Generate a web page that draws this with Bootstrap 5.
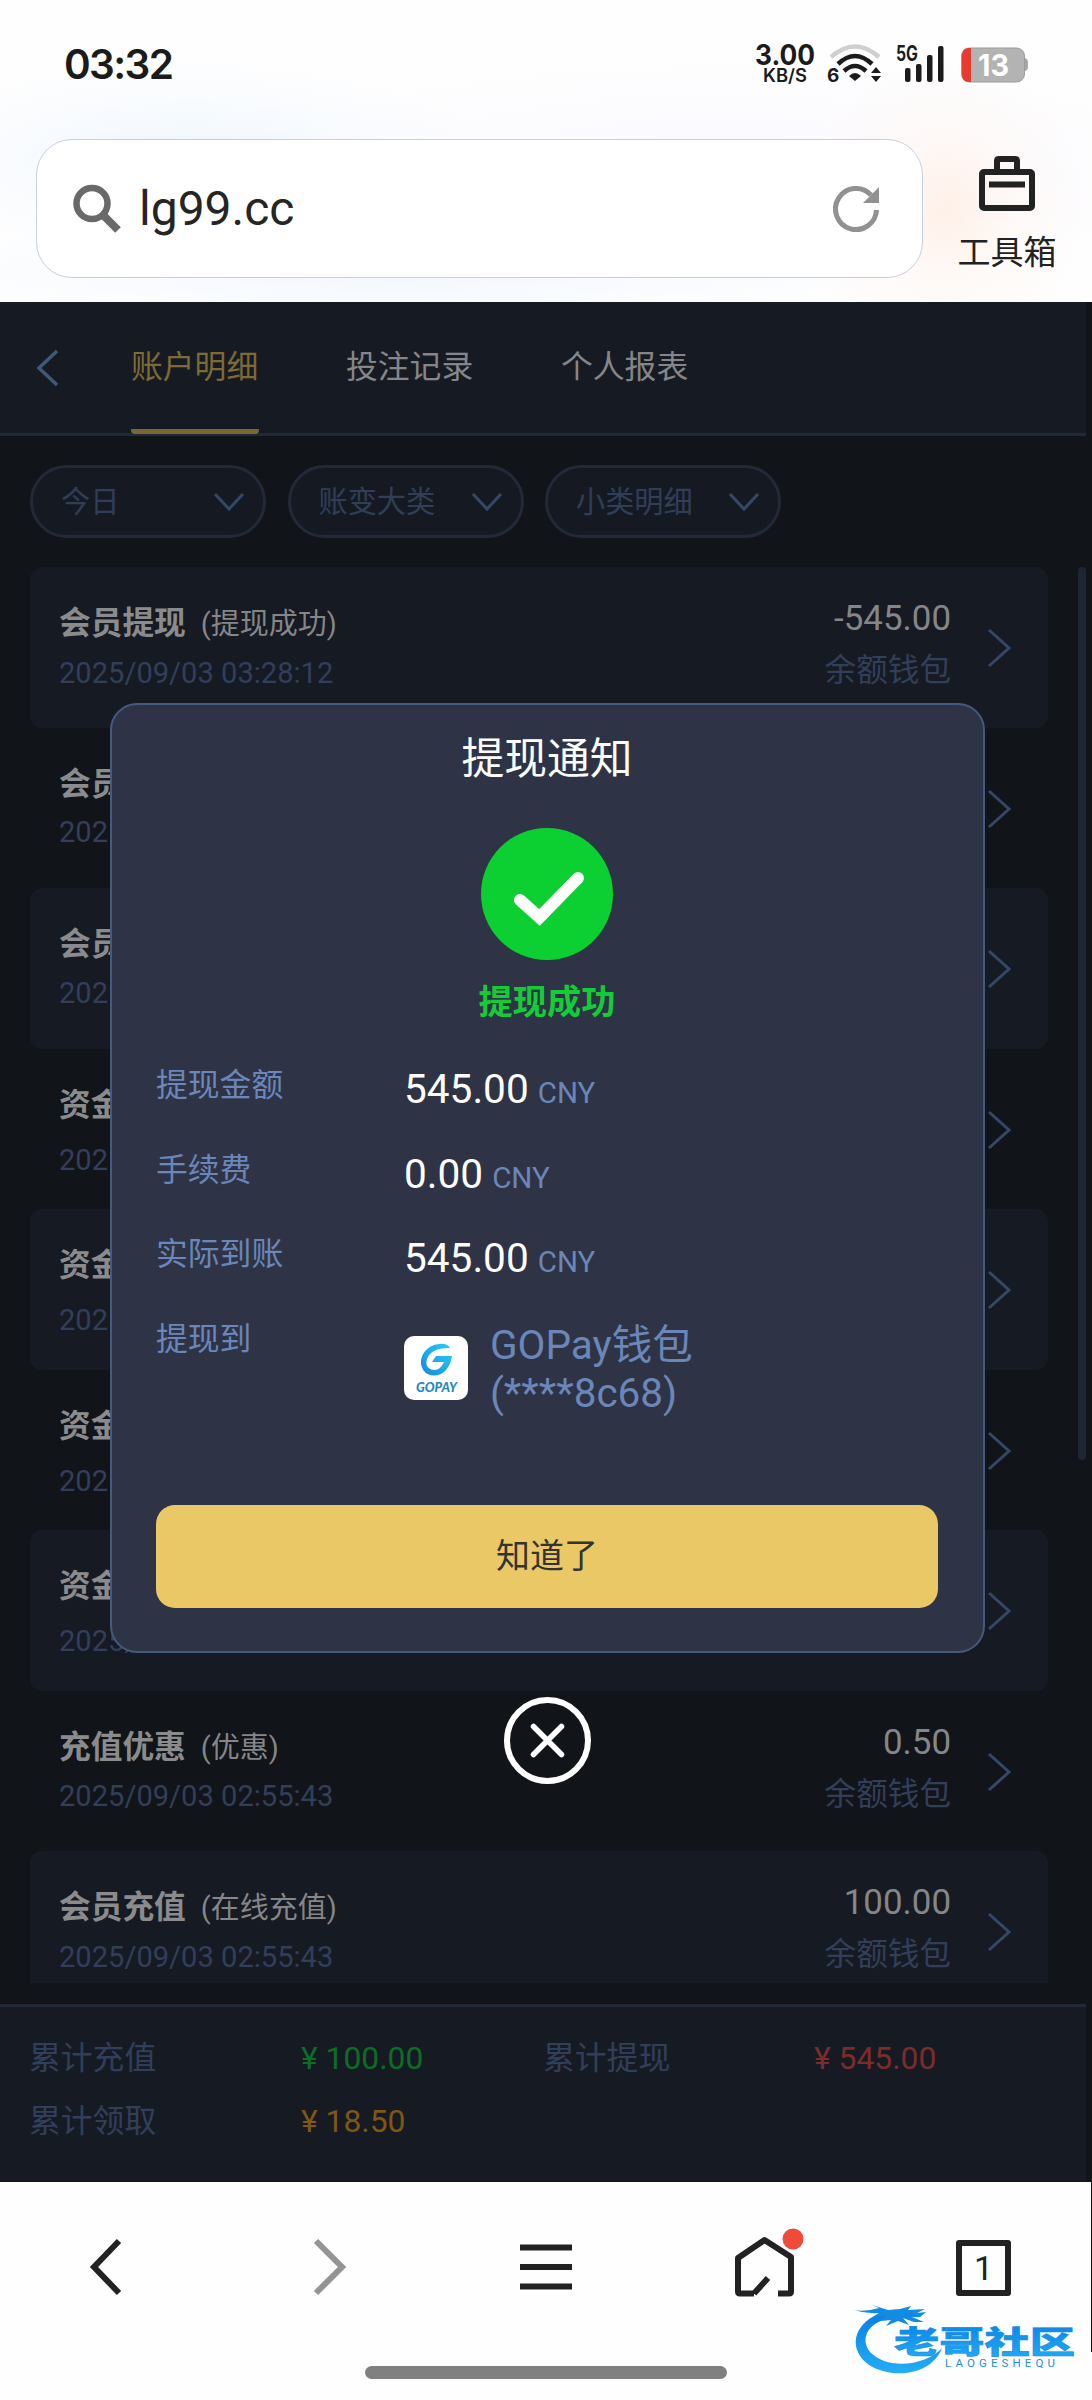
<!DOCTYPE html>
<html lang="zh-CN">
<head>
<meta charset="utf-8">
<meta name="viewport" content="width=device-width, initial-scale=1">
<title>账户明细</title>
<link rel="stylesheet" href="https://cdn.jsdelivr.net/npm/bootstrap@5.3.0/dist/css/bootstrap.min.css">
<style>
body{font-family:Roboto,"Noto Sans CJK SC",sans-serif;width:1092px;height:2400px;overflow:hidden;background:#fefefe;color:#222}
svg{display:block;flex:none;overflow:visible}
.top-area{height:302px;background:radial-gradient(ellipse 300px 100px at 190px 160px,#edf6fe 0,#f4f9fe80 60%,#fff0 100%),radial-gradient(ellipse 140px 150px at 945px 210px,#fff1e9 0,#fff7f280 55%,#fff0 100%),radial-gradient(ellipse 500px 50px at 400px 270px,#f1f7fe 0,#fff0 100%),radial-gradient(ellipse 500px 110px at 720px 170px,#faf8ff 0,#fff0 100%),#fefefe}
.status-row{height:139px;padding:42px 64px 0 64px}
.clock-text{font-family:Inter,Roboto,sans-serif;font-weight:600;font-size:40.5px;line-height:45px;letter-spacing:-1.6px;color:#1b1b1b}
.url-box{width:887px;height:139px;margin-left:36px;border:1px solid #c8d0de;border-radius:36px;background:#fff;padding:0 42px 0 36px}
.url-text{font-size:48px;line-height:60px;margin-left:16px;color:#252525}
.toolbox{width:100px;margin-left:34px;padding-top:17px}
.toolbox-label{font-size:33px;line-height:40px;margin-top:21px}
.site{height:1880px;background:#111418}
.tabs-bar{height:134px;width:1086px;background:#161b23;border-bottom:3px solid #222936;padding-left:36px}
.back-ico{margin-top:48px}
.tab-set{margin-left:71px}
.tab-item{font-size:31.8px;line-height:131px;height:132px;width:127.500px;margin-right:87.500px;color:#858687;white-space:nowrap}
.tab-item.on{color:#7d6a35;border-bottom:5px solid #796736;border-radius:0 0 4px 4px}
.filters{padding:29px 0 29px 30px;gap:21.500px}
.pill{width:236px;height:73px;border:3px solid #222a38;border-radius:37px;background:#151a22;font-size:29.200px;line-height:44px;color:#303e58;padding:1px 19px 0 28px}
.feed{height:1416px;overflow:hidden;width:1048px;padding-left:30px}
.entry{height:160.5px;border-radius:12px;padding:32px 37px 0 29px}
.entry:nth-child(odd){background:#161a22}
.e-title{font-weight:700;font-size:31.7px;line-height:49px;color:#8a8b8c;white-space:nowrap}
.e-title span{font-weight:400;font-size:29px;margin-left:15px;color:#858687}
.e-date{font-size:29.1px;line-height:40px;margin-top:3.500px;color:#323f5a}
.e-low .e-date{margin-top:10px}
.e-amt{font-size:34.9px;line-height:40px;color:#858687}
.e-wallet{font-size:31.6px;line-height:44px;margin-top:10px;color:#323f5a}
.e-arrow{margin:30px 0 0 38px}
.text-end + .e-arrow{margin-left:37px}
.track{width:8px;height:893px;margin-left:30px;border-radius:4px;background:#1e2636}
.totals{width:1086px;height:177px;margin-top:21px;background:#161b23;border-top:3px solid #222936;padding:20px 0 0 29px}
.tot{font-size:31.8px;line-height:63px;color:#323f5a;display:grid;grid-template-columns:272px 242px 271px 200px}
.c-in{color:#0e6d25}.c-out{color:#7c2c2b}.c-gift{color:#7f5713}
.notice{position:absolute;left:110px;top:703px;width:875px;height:950px;border:2px solid #455a80;border-radius:27px;background:#2e3446;padding:27px 45px 0 44px}
.n-title{font-size:42.8px;line-height:55px;color:#fff}
.n-ico{margin-top:41px}
.n-ok{font-weight:700;font-size:34.2px;line-height:44px;margin-top:20px;color:#14cc38}
.n-list{margin-top:37px}
.n-row{height:84.6px;color:#6b86b8}
.n-label{font-size:31.8px;line-height:48px;width:248px}
.n-val{font-size:40.6px;line-height:56px;color:#fff;white-space:nowrap}
.n-val span{font-size:29.5px;color:#6b86b8;margin-left:9px}
.n-pay{margin-top:21px}
.n-bank{font-size:40.5px;line-height:48.5px;margin:6px 0 0 22px}
.n-btn{height:103px;border-radius:19px;background:#ebc866;color:#333;font-size:34px;border:0;margin-top:106px}
.close-x{position:absolute;left:504px;top:1697px}
.bottom-nav{height:218px;position:relative}
.nav-icons{padding:54px 81px 0 88px}
.mark-logo{position:absolute;left:852px;top:118px}
.home-bar{position:absolute;left:365px;top:184px;width:362px;height:13px;border-radius:7px;background:#808080}
.edge{position:absolute;right:0;top:0;width:1px;height:170px;background:#111}
.tab-count{width:56px;height:56px;border:6px solid #222;border-radius:3px;font-size:34px;line-height:44px;margin:4px 0 0 161px}
.ic-fwd{margin-left:192px}.ic-menu{margin-left:172px}.ic-home{margin-left:163px}
</style>
<script src="https://cdn.jsdelivr.net/npm/bootstrap@5.3.0/dist/js/bootstrap.bundle.min.js"></script>
</head>
<body class="position-relative m-0">
<header class="top-area">
  <div class="status-row d-flex justify-content-between">
    <div class="clock-text">03:32</div>
    <svg width="276" height="44" viewBox="752 42 276 44" fill="#1b1b1b" font-family="Inter,Roboto,sans-serif">
      <text x="755" y="65" font-size="28" font-weight="700" textLength="60" lengthAdjust="spacingAndGlyphs">3.00</text>
      <text x="763" y="81.500" font-size="18" font-weight="600" textLength="44" lengthAdjust="spacingAndGlyphs">KB/S</text>
      <g fill="none" stroke="#1b1b1b" stroke-width="4.500">
        <path d="M831 57Q855 36 879 57" stroke="#cfcfcf"/>
        <path d="M838 64Q855 48 872 64"/><path d="M844 71Q855 61 866 71"/>
      </g>
      <path d="M849 76Q855 70 861 76L855 81Z"/>
      <text x="827" y="81.500" font-size="19" font-weight="700">6</text>
      <path d="M871 73l5-6 5 6zM871 76l5 6 5-6z"/>
      <text x="896" y="61" font-size="21" font-weight="700" textLength="22" lengthAdjust="spacingAndGlyphs">5G</text>
      <rect x="905" y="68" width="5.500" height="14" rx="2"/><rect x="916" y="64" width="5.500" height="18" rx="2"/><rect x="927" y="55" width="5.500" height="27" rx="2"/><rect x="938" y="46" width="5.500" height="36" rx="2"/>
      <rect x="961.500" y="48" width="63" height="34" rx="8" fill="#b3b3b3" stroke="#9b9b9b"/>
      <path d="M1025 58q3 1 3 4v5q0 3-3 4z" fill="#a8a8a8"/>
      <path d="M971 48h-2q-7 0-7 8v18q0 8 7 8h2z" fill="#e83a2d"/>
      <text x="978" y="76" font-size="30" font-weight="700" fill="#fff" textLength="31" lengthAdjust="spacingAndGlyphs">13</text>
    </svg>
  </div>
  <div class="d-flex">
    <div class="url-box d-flex align-items-center">
      <svg width="50" height="50" fill="none" stroke="#696969" stroke-width="6.500"><circle cx="19" cy="19.500" r="15.500"/><path d="M30 31L45 46" stroke-width="8"/></svg>
      <div class="url-text flex-grow-1">lg99.cc</div>
      <svg width="48" height="48" fill="none" stroke="#919191" stroke-width="5"><path d="M44.500 25A20.500 20.500 0 1 1 39 10"/><path d="M47 2V18H31Z" fill="#919191" stroke="none"/></svg>
    </div>
    <div class="toolbox d-flex flex-column align-items-center">
      <svg width="56" height="56" fill="none" stroke="#222" stroke-width="6"><rect x="3" y="16" width="50" height="36" rx="2"/><path d="M18 16V5q0-2 2-2H36q2 0 2 2V16"/><path d="M10 28.500H46"/></svg>
      <div class="toolbox-label">工具箱</div>
    </div>
  </div>
</header>

<main class="site">
  <nav class="tabs-bar d-flex">
    <svg class="back-ico" width="24" height="36" fill="none" stroke="#405879" stroke-width="3.500"><path d="M21 1L3 18 21 35"/></svg>
    <div class="tab-set d-flex">
      <div class="tab-item on">账户明细</div><div class="tab-item">投注记录</div><div class="tab-item">个人报表</div>
    </div>
  </nav>
  <div class="filters d-flex">
    <div class="pill d-flex align-items-center justify-content-between">今日<svg width="30" height="20" fill="none" stroke="#334968" stroke-width="3"><path d="M1 2L15 17 29 2"/></svg></div>
    <div class="pill d-flex align-items-center justify-content-between">账变大类<svg width="30" height="20" fill="none" stroke="#334968" stroke-width="3"><path d="M1 2L15 17 29 2"/></svg></div>
    <div class="pill d-flex align-items-center justify-content-between">小类明细<svg width="30" height="20" fill="none" stroke="#334968" stroke-width="3"><path d="M1 2L15 17 29 2"/></svg></div>
  </div>
  <div class="d-flex">
    <div class="feed">
      <div class="entry d-flex"><div class="flex-grow-1"><div class="e-title">会员提现<span>(提现成功)</span></div><div class="e-date">2025/09/03 03:28:12</div></div><div class="text-end"><div class="e-amt">-545.00</div><div class="e-wallet">余额钱包</div></div><svg class="e-arrow" width="23" height="38" fill="none" stroke="#334968" stroke-width="3"><path d="M1 1L21 19 1 37"/></svg></div>
      <div class="entry d-flex"><div class="flex-grow-1"><div class="e-title">会员</div><div class="e-date">202</div></div><svg class="e-arrow" width="23" height="38" fill="none" stroke="#334968" stroke-width="3"><path d="M1 1L21 19 1 37"/></svg></div>
      <div class="entry d-flex"><div class="flex-grow-1"><div class="e-title">会员</div><div class="e-date">202</div></div><svg class="e-arrow" width="23" height="38" fill="none" stroke="#334968" stroke-width="3"><path d="M1 1L21 19 1 37"/></svg></div>
      <div class="entry e-low d-flex"><div class="flex-grow-1"><div class="e-title">资金</div><div class="e-date">202</div></div><svg class="e-arrow" width="23" height="38" fill="none" stroke="#334968" stroke-width="3"><path d="M1 1L21 19 1 37"/></svg></div>
      <div class="entry e-low d-flex"><div class="flex-grow-1"><div class="e-title">资金</div><div class="e-date">202</div></div><svg class="e-arrow" width="23" height="38" fill="none" stroke="#334968" stroke-width="3"><path d="M1 1L21 19 1 37"/></svg></div>
      <div class="entry e-low d-flex"><div class="flex-grow-1"><div class="e-title">资金</div><div class="e-date">202</div></div><svg class="e-arrow" width="23" height="38" fill="none" stroke="#334968" stroke-width="3"><path d="M1 1L21 19 1 37"/></svg></div>
      <div class="entry e-low d-flex"><div class="flex-grow-1"><div class="e-title">资金</div><div class="e-date">2025/</div></div><svg class="e-arrow" width="23" height="38" fill="none" stroke="#334968" stroke-width="3"><path d="M1 1L21 19 1 37"/></svg></div>
      <div class="entry d-flex"><div class="flex-grow-1"><div class="e-title">充值优惠<span>(优惠)</span></div><div class="e-date">2025/09/03 02:55:43</div></div><div class="text-end"><div class="e-amt">0.50</div><div class="e-wallet">余额钱包</div></div><svg class="e-arrow" width="23" height="38" fill="none" stroke="#334968" stroke-width="3"><path d="M1 1L21 19 1 37"/></svg></div>
      <div class="entry d-flex"><div class="flex-grow-1"><div class="e-title">会员充值<span>(在线充值)</span></div><div class="e-date">2025/09/03 02:55:43</div></div><div class="text-end"><div class="e-amt">100.00</div><div class="e-wallet">余额钱包</div></div><svg class="e-arrow" width="23" height="38" fill="none" stroke="#334968" stroke-width="3"><path d="M1 1L21 19 1 37"/></svg></div>
    </div>
    <div class="track"></div>
  </div>
  <footer class="totals">
    <div class="tot"><span>累计充值</span><span class="c-in">¥ 100.00</span><span>累计提现</span><span class="c-out">¥ 545.00</span></div>
    <div class="tot"><span>累计领取</span><span class="c-gift">¥ 18.50</span></div>
  </footer>
</main>

<section class="notice">
  <div class="n-title text-center">提现通知</div>
  <svg class="n-ico mx-auto" width="132" height="132"><circle cx="66" cy="66" r="66" fill="#0cd031"/><path d="M39 72L58.500 89.500 97 50" fill="none" stroke="#fff" stroke-width="12" stroke-linecap="round"/></svg>
  <div class="n-ok text-center">提现成功</div>
  <div class="n-list">
    <div class="n-row d-flex"><div class="n-label">提现金额</div><div class="n-val">545.00<span>CNY</span></div></div>
    <div class="n-row d-flex"><div class="n-label">手续费</div><div class="n-val">0.00<span>CNY</span></div></div>
    <div class="n-row d-flex"><div class="n-label">实际到账</div><div class="n-val">545.00<span>CNY</span></div></div>
    <div class="n-row d-flex"><div class="n-label">提现到</div>
      <svg class="n-pay" width="64" height="64"><defs><linearGradient id="gp" x1="0" y1="1" x2="1" y2="0"><stop offset="0" stop-color="#1687dd"/><stop offset="1" stop-color="#2ad0f5"/></linearGradient></defs><rect width="64" height="64" rx="10" fill="#fff"/><path d="M46 12Q43 7 35 8C23 9 16 19 17 28C19 41 34 43 42 34Q47 28 48 20H32L28 26H40Q37 33 31 34C24 34 21 29 23 23C26 15 34 12 46 12Z" fill="url(#gp)"/><text x="12" y="55.500" font-family="Lato,sans-serif" font-weight="900" font-style="italic" font-size="13" fill="#2388bd" textLength="41" lengthAdjust="spacingAndGlyphs">GOPAY</text></svg>
      <div class="n-bank">GOPay钱包<br>(****8c68)</div></div>
  </div>
  <button class="n-btn btn w-100 d-block">知道了</button>
</section>
<svg class="close-x" width="87" height="87" fill="none" stroke="#fff" stroke-width="6"><circle cx="43.500" cy="43.500" r="40.500"/><path d="M29.500 29.500L57.500 57.500M57.500 29.500L29.500 57.500" stroke-linecap="round" stroke-width="5.500"/></svg>

<nav class="bottom-nav">
  <div class="nav-icons d-flex">
    <svg width="34" height="62" fill="none" stroke="#222" stroke-width="6"><path d="M31 5L6 31 31 57"/></svg>
    <svg class="ic-fwd" width="34" height="62" fill="none" stroke="#949494" stroke-width="6"><path d="M2 5L28 31 2 57"/></svg>
    <svg class="ic-menu" width="52" height="62" stroke="#222" stroke-width="6"><path d="M0 11.500H52M0 31H52M0 50.500H52"/></svg>
    <svg class="ic-home" width="60" height="62" fill="none" stroke="#222" stroke-width="6"><path d="M19 57.500H5q-2 0-2-2V22L29.500 4 56 21V55.500q0 2-2 2H43M19 57.500L33 42" stroke-linejoin="round"/><circle cx="58" cy="3" r="10.500" fill="#f04a39" stroke="none"/></svg>
    <div class="tab-count text-center">1</div>
  </div>
  <div class="home-bar"></div><div class="edge"></div>
  <svg class="mark-logo" width="226" height="76" viewBox="852 2300 226 76">
    <defs><linearGradient id="lg" x1="0" y1="0" x2="0" y2="1"><stop offset="0" stop-color="#087fe3"/><stop offset="1" stop-color="#24adf5"/></linearGradient></defs>
    <path d="M884 2312C861 2319 851 2337 858 2352C869 2379 929 2383 942 2348C927 2365 888 2371 870 2352C860 2339 867 2323 890 2318Z" fill="url(#lg)"/>
    <path d="M854 2310Q866 2312 879 2308L872 2305 888 2310 900 2309 911 2306 908 2310 925 2309 917 2313 926 2312 920 2317 912 2317 924 2322 914 2322 903 2318 909 2325 898 2321 886 2326 891 2320 881 2321 886 2315 873 2317 879 2313Q866 2314 854 2310Z" fill="#118be5"/>
    <text x="894" y="2353" font-family="'Noto Sans CJK SC',sans-serif" font-weight="900" font-size="31" fill="url(#lg)" stroke="#168de8" stroke-width=".6" textLength="181" lengthAdjust="spacingAndGlyphs">老哥社区</text>
    <text x="945" y="2367" font-family="Roboto,sans-serif" font-size="11.500" fill="#258fe0" textLength="110">LAOGESHEQU</text>
  </svg>
</nav>
</body>
</html>
